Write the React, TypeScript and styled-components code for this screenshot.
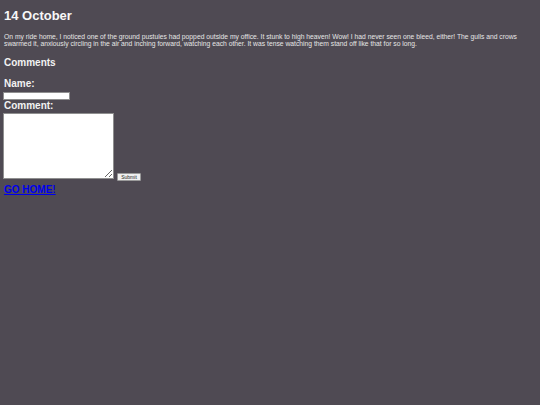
import React from 'react';
import styled, { createGlobalStyle } from 'styled-components';

const GlobalStyle = createGlobalStyle`
  html, body {
    margin: 0;
    background: #4f4a53;
  }
  body {
    font-family: "Liberation Sans", Arial, Helvetica, sans-serif;
    color: #f2f2f2;
  }
`;

const Page = styled.div`
  padding: 0 4px 0 4px;
`;

const Title = styled.h1`
  font-size: 13px;
  line-height: 15px;
  font-weight: bold;
  margin: 8px 0 0 0;
  color: #f7f7f7;
`;

const Entry = styled.p`
  font-size: 6.75px;
  line-height: 7px;
  margin: 10px 0 0 0;
  color: #e6e6e6;
`;

const SectionTitle = styled.h2`
  font-size: 10px;
  line-height: 11.5px;
  font-weight: bold;
  margin: 9.5px 0 0 0;
`;

const Form = styled.form`
  margin: 9.5px 0 0 0;
  display: flex;
  flex-direction: column;
  align-items: flex-start;
`;

const Label = styled.label`
  display: block;
  font-size: 10px;
  line-height: 11.5px;
  font-weight: bold;
`;

const NameInput = styled.input`
  box-sizing: border-box;
  width: 67px;
  height: 8px;
  margin: 2.5px 0 0 -1px;
  padding: 0;
  border: 1px solid #8f8f8f;
  background: #fff;
`;

const CommentRow = styled.div`
  display: flex;
  align-items: flex-end;
  gap: 3px;
  margin: 2px 0 0 -1px;
`;

const CommentBox = styled.textarea`
  box-sizing: border-box;
  width: 111px;
  height: 66px;
  margin: 0;
  padding: 1px;
  border: 1px solid #8f8f8f;
  background: #fff;
  font-size: 6px;
`;

const SubmitButton = styled.button`
  box-sizing: border-box;
  width: 24px;
  height: 8px;
  padding: 0;
  margin: 0 0 -2px 0;
  border: 1px solid #9a9a9a;
  border-radius: 1px;
  background: #f0f0f0;
  color: #222;
  font-family: "Liberation Sans", Arial, sans-serif;
  font-size: 5px;
  line-height: 6px;
`;

const HomeLink = styled.a`
  display: inline-block;
  margin: 0;
  font-size: 10px;
  line-height: 11.5px;
  font-weight: bold;
  color: #0000ee;
  text-decoration: underline;
`;

export default function App() {
  return (
    <Page>
      <GlobalStyle />
      <Title>14 October</Title>
      <Entry>
        On my ride home, I noticed one of the ground pustules had popped outside my office. It
        stunk to high heaven! Wow! I had never seen one bleed, either! The gulls and crows swarmed
        it, anxiously circling in the air and inching forward, watching each other. It was tense
        watching them stand off like that for so long.
      </Entry>
      <SectionTitle>Comments</SectionTitle>
      <Form onSubmit={e => e.preventDefault()}>
        <Label htmlFor="name">Name:</Label>
        <NameInput id="name" type="text" />
        <Label htmlFor="comment">Comment:</Label>
        <CommentRow>
          <CommentBox id="comment" />
          <SubmitButton type="submit">Submit</SubmitButton>
        </CommentRow>
      </Form>
      <HomeLink href="#">GO HOME!</HomeLink>
    </Page>
  );
}
